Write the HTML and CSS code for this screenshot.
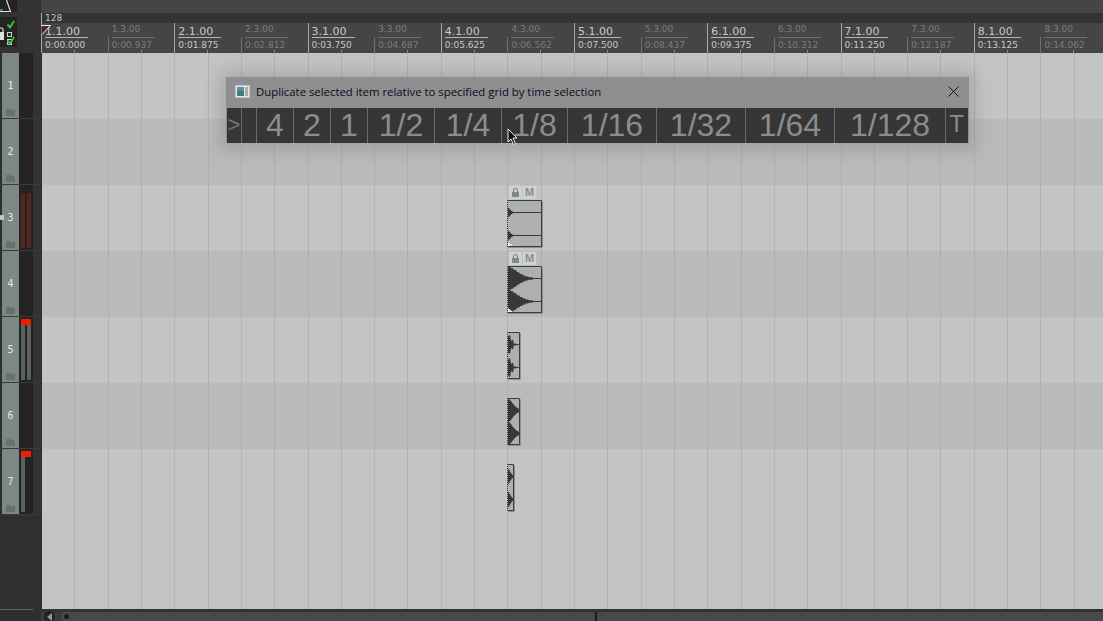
FILE: index.html
```html
<!DOCTYPE html>
<html lang="en">
<head>
  <meta charset="UTF-8" />
  <title>Arrange view</title>
  <link rel="stylesheet" href="styles.css">
</head>
<body>

<div id="app">
  <div id="side">
    <div class="side-head">
      <div class="logo-box">
        <svg width="17" height="12" viewBox="0 0 17 12">
          <path d="M0 11.500 H10.500 L6.500 0" fill="none" stroke="#dcdcdc" stroke-width="1.200"/>
          <path d="M0 10 H3" stroke="#2fc23a" stroke-width="1.500"/>
        </svg>
      </div>
      <div class="lock-box">
        <svg width="17" height="30" viewBox="0 0 17 30">
          <rect x="-1" y="15" width="5" height="8" fill="#e0e0e0"/>
          <path d="M-1 15 V12 a2.500 2.500 0 0 1 4 0 V15" fill="none" stroke="#e0e0e0" stroke-width="1.200"/>
          <path d="M7.500 7.500 l2.500 3 l4 -6.500" fill="none" stroke="#2fc23a" stroke-width="2"/>
          <rect x="7.500" y="15.500" width="4" height="4" fill="none" stroke="#d0d0d0"/>
          <rect x="7.500" y="22.500" width="4" height="5" fill="none" stroke="#d0d0d0"/>
          <path d="M7.500 23.500 l2.500 3 l4 -6.500" fill="none" stroke="#2fc23a" stroke-width="2"/>
        </svg>
      </div>
    </div>
    <div id="tracks"></div>
    <div class="side-end"></div>
  </div>

  <div id="main">
    <div class="top-strip"></div>
    <div class="tempo-strip">128</div>
    <div id="ruler"></div>
    <svg class="start-marker" width="10" height="10" viewBox="0 0 10 10">
      <path d="M0.500 9.500 V0.500 H9 Z" fill="#4a2326"/>
      <path d="M0 0.500 H9.500 L1 9.500" fill="none" stroke="#eee" stroke-width="1"/>
    </svg>

    <div id="arrange">
      <div id="rows"></div>
      <div id="grid"></div>
      <div id="items"></div>

      <div class="dialog">
        <div class="dialog-title">
          <svg width="15" height="13" viewBox="0 0 15 13">
            <rect x="0.500" y="0.500" width="14" height="12" fill="#e4e4e4" stroke="#c4c4c4"/>
            <rect x="2" y="2" width="7" height="9" fill="#3f7f7c"/>
            <rect x="2" y="2" width="7" height="4" fill="#5a90a8"/>
            <rect x="10" y="2" width="3" height="9" fill="#9fb5a8"/>
          </svg>
          <span class="dialog-name">Duplicate selected item relative to specified grid by time selection</span>
          <svg class="dialog-close" width="11" height="11" viewBox="0 0 11 11">
            <path d="M0.500 0.500 L10.500 10.500 M10.500 0.500 L0.500 10.500" stroke="#111" stroke-width="1"/>
          </svg>
        </div>
        <div class="dialog-tools" id="tools"></div>
      </div>

      <svg class="cursor" width="12" height="18" viewBox="0 0 12 18">
        <path d="M1 1 L1 14 L4 11 L6.500 16.500 L8.500 15.500 L6 10 L10 10 Z" fill="#111" stroke="#eee" stroke-width="1"/>
      </svg>
    </div>

    <div class="bottom">
      <div class="scroll-btn"><svg width="8" height="8" viewBox="0 0 8 8"><path d="M6 0 L6 8 L1 4 Z" fill="#999"/></svg></div>
      <div class="scroll-track">
        <span class="scroll-dot"></span>
        <span class="scroll-tick"></span>
      </div>
    </div>
  </div>
</div>

<script src="app.js"></script>

</body>
</html>
```
FILE: styles.css
```css
html, body {
  margin: 0;
  height: 100%;
  overflow: hidden;
}
body {
  font-family: "Liberation Sans", Arial, sans-serif;
  background-color: #2f2f2f;
}
#app {
  display: flex;
  width: 1103px;
  height: 621px;
}

/* left track panel */
#side {
  width: 41px;
  flex: none;
  display: flex;
  flex-direction: column;
  background: #2f2f2f;
}
.side-head {
  height: 53px;
  flex: none;
  background: #333;
  overflow: hidden;
}
.logo-box {
  width: 17px;
  height: 12px;
  background: #232323;
}
.logo-box svg, .lock-box svg {
  display: block;
}
.lock-box {
  width: 17px;
  height: 30px;
  margin-top: 5px;
  background: #232323;
}
.track {
  height: 66px;
  box-sizing: border-box;
  display: flex;
  border-bottom: 1px solid #3a3a3a;
}
.track-head {
  width: 17px;
  margin-left: 1px;
  flex: none;
  background: #7c8886;
  border-left: 1px solid #2f2f2f;
  display: flex;
  flex-direction: column;
  align-items: center;
  position: relative;
}
.track-num {
  font-family: "DejaVu Sans Mono", monospace;
  font-size: 10px;
  color: #e6e6e6;
  margin-top: 27px;
}
.track-knob {
  position: absolute;
  left: -2px;
  top: 30px;
  width: 4px;
  height: 5px;
  background: #c8c8c8;
  border-radius: 1px;
}
.folder {
  margin-top: auto;
  margin-bottom: 2px;
}
.meter {
  width: 14px;
  flex: none;
  background: #232323;
  display: flex;
  justify-content: center;
  gap: 2px;
  position: relative;
}
.meter-bar {
  width: 4px;
  margin: 8px 0 2px;
  background: #5e605e;
}
.meter-bar.armed {
  background: #552520;
}
.meter-peak {
  position: absolute;
  top: 2px;
  left: 2px;
  width: 10px;
  height: 6px;
  background: #f01c00;
}
.track-rest {
  flex: 1;
  background: #333;
}
.side-end {
  flex: 1;
  display: flex;
  align-items: flex-end;
}
.side-end::after {
  content: "";
  width: 33px;
  height: 1px;
  background: #666;
  margin-bottom: 11px;
}

/* header strips */
#main {
  flex: 1;
  min-width: 0;
  display: flex;
  flex-direction: column;
  position: relative;
}
.top-strip {
  height: 13px;
  background: #454545;
}
.tempo-strip {
  height: 10px;
  background: #333;
  color: #c4c4c4;
  font-family: "DejaVu Sans", sans-serif;
  font-size: 9px;
  line-height: 11px;
  padding-left: 3px;
  border-left: 1px solid #a8a8a8;
}
.start-marker {
  position: absolute;
  left: 0;
  top: 25px;
}
#ruler {
  height: 30px;
  flex: none;
  display: flex;
  background: #454545;
  overflow: hidden;
}
.bar {
  flex: 0 0 66.625px;
  box-sizing: border-box;
  padding-left: 4px;
  font-family: "DejaVu Sans", sans-serif;
  color: #7c7c7c;
  position: relative;
}
.bar-top {
  font-size: 9px;
  line-height: 11px;
  padding-top: 1px;
  width: 43px;
  height: 15px;
  box-sizing: border-box;
  border-bottom: 1px solid #707070;
  white-space: nowrap;
}
.bar-time {
  font-size: 9px;
  line-height: 14px;
  white-space: nowrap;
}
.bar.major {
  color: #c8c8c8;
}
.bar.major .bar-top {
  font-size: 11px;
  padding-top: 3px;
  line-height: 12px;
  border-bottom-color: #b4b4b4;
}
.bar.major::before {
  content: "";
  position: absolute;
  left: 0;
  top: 0;
  bottom: 0;
  width: 1px;
  background: #a8a8a8;
}
.bar.minor::before {
  content: "";
  position: absolute;
  left: 0;
  top: 14px;
  bottom: 0;
  width: 1px;
  background: #707070;
}
.bar::after {
  content: "";
  position: absolute;
  left: 33px;
  bottom: 0;
  width: 1px;
  height: 3px;
  background: #8a8a8a;
}

/* arrange view */
#arrange {
  flex: 1;
  min-height: 0;
  position: relative;
  overflow: hidden;
  background: #c3c5c3;
}
#arrange::before {
  content: "";
  position: absolute;
  left: 0;
  top: 0;
  bottom: 0;
  width: 1px;
  background: #4a2326;
  z-index: 1;
}
#rows {
  display: flex;
  flex-direction: column;
}
.row {
  height: 66px;
  flex: none;
}
.row.even {
  background: #b9bbb9;
}
#grid {
  position: absolute;
  inset: 0;
  display: flex;
}
.grid-line {
  flex: 0 0 33.3125px;
  box-sizing: border-box;
  border-left: 1px dotted #a0a2a0;
}
.grid-line.first {
  border-left: none;
}

#items {
  position: absolute;
  inset: 0;
}
.item {
  position: absolute;
  box-sizing: border-box;
  height: 47px;
  background: #adb0ae;
  border: 1px solid #3c3c3c;
  border-left-style: dotted;
  border-radius: 1px;
  box-shadow: 1px 1px 0 #8e908e;
}
.item svg {
  display: block;
}
.item-flags {
  position: absolute;
  display: flex;
  gap: 1px;
}
.flag {
  width: 13px;
  height: 13px;
  background: #d0d2d0;
  color: #8b8d8b;
  font-size: 11px;
  line-height: 13px;
  font-weight: bold;
  text-align: center;
  display: flex;
  align-items: center;
  justify-content: center;
}

/* floating toolbar */
.dialog {
  position: absolute;
  left: 185px;
  top: 24px;
  width: 743px;
  height: 66px;
  background: #8f8f8f;
  box-shadow: 0 1px 14px 7px rgba(105, 105, 105, 0.28);
  display: flex;
  flex-direction: column;
  z-index: 2;
}
.dialog-title {
  height: 30px;
  flex: none;
  box-sizing: border-box;
  display: flex;
  align-items: center;
  padding: 0 10px 2px 9px;
  gap: 6px;
  background: #8f8f8f;
}
.dialog-name {
  font-family: "Open Sans", "Noto Sans", sans-serif;
  font-size: 11.35px;
  color: #0a0a1e;
  flex: 1;
  white-space: nowrap;
}
.dialog-tools {
  display: flex;
  height: 35px;
  margin: 1px 1px 0 1px;
  background: #363636;
}
.tool {
  box-sizing: border-box;
  height: 100%;
  border-left: 1px solid #6a6a6a;
  color: #8c8c8c;
  font-size: 32px;
  line-height: 35px;
  text-align: center;
  white-space: nowrap;
}
.tool:first-child {
  border-left: none;
}
.tool.small {
  font-size: 24px;
  line-height: 32px;
}
.tool.thin {
  font-size: 22px;
  line-height: 34px;
  color: #777;
}
.cursor {
  position: absolute;
  left: 466px;
  top: 75px;
  z-index: 3;
}

/* bottom scrollbar */
.bottom {
  height: 12px;
  flex: none;
  box-sizing: border-box;
  border-top: 3px solid #333;
  background: #3a3a3a;
  display: flex;
  align-items: center;
  gap: 6px;
  padding-left: 3px;
}
.scroll-btn {
  width: 11px;
  height: 11px;
  border-radius: 50%;
  background: #222;
  display: flex;
  align-items: center;
  justify-content: center;
  flex: none;
}
.scroll-track {
  flex: 1;
  height: 9px;
  background: #484848;
  border-radius: 5px 0 0 5px;
  position: relative;
  display: flex;
  align-items: center;
  padding-left: 3px;
}
.scroll-dot {
  width: 5px;
  height: 5px;
  border-radius: 50%;
  background: #1c1c1c;
}
.scroll-tick {
  position: absolute;
  left: 534px;
  top: 0;
  bottom: 0;
  width: 2px;
  background: #1c1c1c;
}
```
FILE: app.js
```js
// tracks: number + what the meter shows
const tracks = [
  { n: 1, meter: "none" },
  { n: 2, meter: "none" },
  { n: 3, meter: "armed" },
  { n: 4, meter: "none" },
  { n: 5, meter: "peak" },
  { n: 6, meter: "none" },
  { n: 7, meter: "peakOne" },
];

const folder = '<svg class="folder" width="9" height="7" viewBox="0 0 9 7"><path d="M0 0 H4 L5 1 H9 V7 H0 Z" fill="#667270"/></svg>';

function renderTracks() {
  const box = document.getElementById("tracks");
  tracks.forEach(t => {
    let bars = "";
    if (t.meter === "armed") {
      bars = '<div class="meter-bar armed"></div><div class="meter-bar armed"></div>';
    } else if (t.meter === "peak") {
      bars = '<div class="meter-peak"></div><div class="meter-bar"></div><div class="meter-bar"></div>';
    } else if (t.meter === "peakOne") {
      bars = '<div class="meter-peak"></div><div class="meter-bar"></div><div style="width:4px"></div>';
    }
    const knob = t.n === 3 ? '<span class="track-knob"></span>' : "";
    const el = document.createElement("div");
    el.className = "track";
    el.innerHTML = `
      <div class="track-head">${knob}<span class="track-num">${t.n}</span>${folder}</div>
      <div class="meter">${bars}</div>
      <div class="track-rest"></div>`;
    box.appendChild(el);
  });
}

const times = ["0:00.000", "0:00.937", "0:01.875", "0:02.812", "0:03.750", "0:04.687", "0:05.625", "0:06.562",
  "0:07.500", "0:08.437", "0:09.375", "0:10.312", "0:11.250", "0:12.187", "0:13.125", "0:14.062"];

function renderRuler() {
  const box = document.getElementById("ruler");
  times.forEach((time, i) => {
    const major = i % 2 === 0;
    const label = `${Math.floor(i / 2) + 1}.${major ? 1 : 3}.00`;
    const el = document.createElement("div");
    el.className = "bar " + (major ? "major" : "minor");
    el.innerHTML = `<div class="bar-top">${label}</div><div class="bar-time">${time}</div>`;
    box.appendChild(el);
  });
}

function renderRows() {
  const rows = document.getElementById("rows");
  for (let i = 0; i < 7; i++) {
    const el = document.createElement("div");
    el.className = "row" + (i % 2 === 1 ? " even" : "");
    rows.appendChild(el);
  }
  const grid = document.getElementById("grid");
  for (let i = 0; i < 33; i++) {
    const el = document.createElement("div");
    el.className = "grid-line" + (i === 0 ? " first" : "");
    grid.appendChild(el);
  }
}

// waveform envelope for one hit, one point per pixel, jitter gives the jagged edge
function hit(mid, amp, len, w, jag) {
  let top = "";
  let bottom = "";
  for (let x = 0; x <= w; x++) {
    const rough = jag ? ((x * 7) % 3 - 1) * jag : 0;
    const a = Math.max(0.6, amp * Math.exp(-Math.pow(x / (len * 0.55), 1.6)) + (x < len ? rough : 0));
    top += `L${x} ${(mid - a).toFixed(1)} `;
    bottom = `L${x} ${(mid + a).toFixed(1)} ` + bottom;
  }
  return "M" + top.slice(1) + bottom + "Z";
}

const items = [
  { x: 466, y: 147, w: 35, amp: 5, len: 6, tri: true, flags: true },
  { x: 466, y: 213, w: 35, amp: 12, len: 24, jag: 0.5, tri: true, flags: true },
  { x: 466, y: 279, w: 13, amp: 10, len: 8, jag: 2 },
  { x: 466, y: 345, w: 13, amp: 12, len: 13 },
  { x: 466, y: 411, w: 7, amp: 8, len: 6 },
];

function renderItems() {
  const box = document.getElementById("items");
  items.forEach(it => {
    if (it.flags) {
      const flags = document.createElement("div");
      flags.className = "item-flags";
      flags.style.left = it.x + 2 + "px";
      flags.style.top = it.y - 14 + "px";
      flags.innerHTML = `<div class="flag"><svg width="9" height="9" viewBox="0 0 9 9"><rect x="1" y="4" width="7" height="5" fill="#7e8a88"/><path d="M2.500 4 V2.500 a2 2 0 0 1 4 0 V4" fill="none" stroke="#7e8a88" stroke-width="1.200"/></svg></div><div class="flag">M</div>`;
      box.appendChild(flags);
    }
    const el = document.createElement("div");
    el.className = "item";
    el.style.left = it.x + "px";
    el.style.top = it.y + "px";
    el.style.width = it.w + "px";
    const w = it.w - 2;
    const d = hit(11.5, it.amp, it.len, w, it.jag) + " " + hit(34.5, it.amp, it.len, w, it.jag);
    const fade = it.tri ? '<path d="M0 45 V41 L5 45 Z" fill="#eee"/>' : "";
    el.innerHTML = `<svg width="${w}" height="45" viewBox="0 0 ${w} 45"><path d="${d}" fill="#383838"/>${fade}</svg>`;
    box.appendChild(el);
  });
}

const tools = [
  [">", 14, "thin"], ["", 15], ["4", 37], ["2", 37], ["1", 37], ["1/2", 67], ["1/4", 67], ["1/8", 66],
  ["1/16", 89], ["1/32", 89], ["1/64", 89], ["1/128", 111], ["T", 22, "small"],
];

function renderTools() {
  const box = document.getElementById("tools");
  tools.forEach(t => {
    const el = document.createElement("div");
    el.className = "tool" + (t[2] ? " " + t[2] : "");
    el.style.width = t[1] + "px";
    el.textContent = t[0];
    box.appendChild(el);
  });
}

renderTracks();
renderRuler();
renderRows();
renderItems();
renderTools();
```
